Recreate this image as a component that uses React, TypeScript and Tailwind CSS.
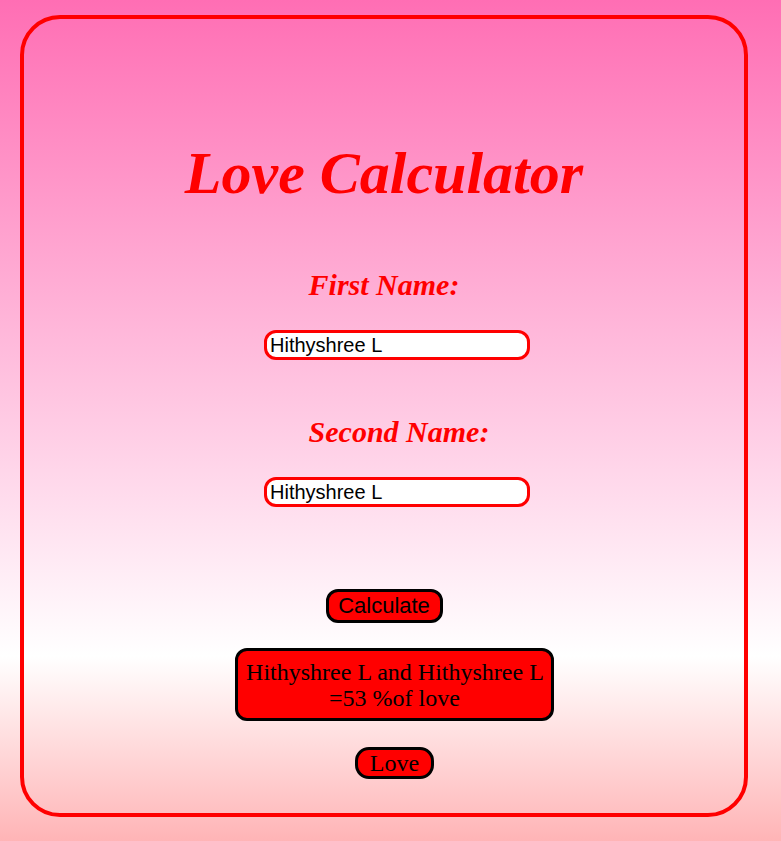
import React, { useState } from "react";

const serif = "font-['Liberation_Serif','Times_New_Roman',serif]";
const sans = "font-['Liberation_Sans',Arial,sans-serif]";

export default function App() {
  const [first, setFirst] = useState("Hithyshree L");
  const [second, setSecond] = useState("Hithyshree L");

  return (
    <div className="min-h-screen bg-[linear-gradient(#ff6eb4,#ffffff_78%,#ffb4b6)] pt-[15px] pb-[24px]">
      <div className="ml-[20px] w-[728px] h-[802px] border-4 border-[#ff0000] rounded-[40px] flex flex-col items-center pt-[124px]">
        <h1 className={`${serif} text-[60px] leading-none font-bold italic text-[#ff0000] h-[60px]`}>
          Love Calculator
        </h1>

        <h2 className={`${serif} mt-[67px] text-[30px] leading-none font-bold italic text-[#ff0000] h-[30px]`}>
          First Name:
        </h2>
        <input
          value={first}
          onChange={(e) => setFirst(e.target.value)}
          className={`${sans} mt-[30px] ml-[26px] w-[266px] h-[30px] bg-white border-[3px] border-[#ff0000] rounded-[12px] px-[3px] text-[20px] leading-none text-black outline-none`}
        />

        <h2 className={`${serif} mt-[57px] ml-[30px] text-[30px] leading-none font-bold italic text-[#ff0000] h-[30px]`}>
          Second Name:
        </h2>
        <input
          value={second}
          onChange={(e) => setSecond(e.target.value)}
          className={`${sans} mt-[30px] ml-[26px] w-[266px] h-[30px] bg-white border-[3px] border-[#ff0000] rounded-[12px] px-[3px] text-[20px] leading-none text-black outline-none`}
        />

        <button
          className={`${sans} mt-[82px] h-[34px] w-[117px] bg-[#ff0000] border-[3px] border-black rounded-[12px] text-[22px] leading-none text-black flex items-center justify-center`}
        >
          Calculate
        </button>

        <div
          className={`${serif} mt-[25px] ml-[21px] w-[319px] h-[73px] bg-[#ff0000] border-[3px] border-black rounded-[12px] text-[24px] leading-[26px] text-black text-center flex items-center justify-center px-[4px]`}
        >
          {first} and {second} =53 %of love
        </div>

        <button
          className={`${serif} mt-[26px] ml-[21px] h-[32px] w-[79px] bg-[#ff0000] border-[3px] border-black rounded-[14px] text-[24px] leading-none text-black flex items-center justify-center`}
        >
          Love
        </button>
      </div>
    </div>
  );
}
